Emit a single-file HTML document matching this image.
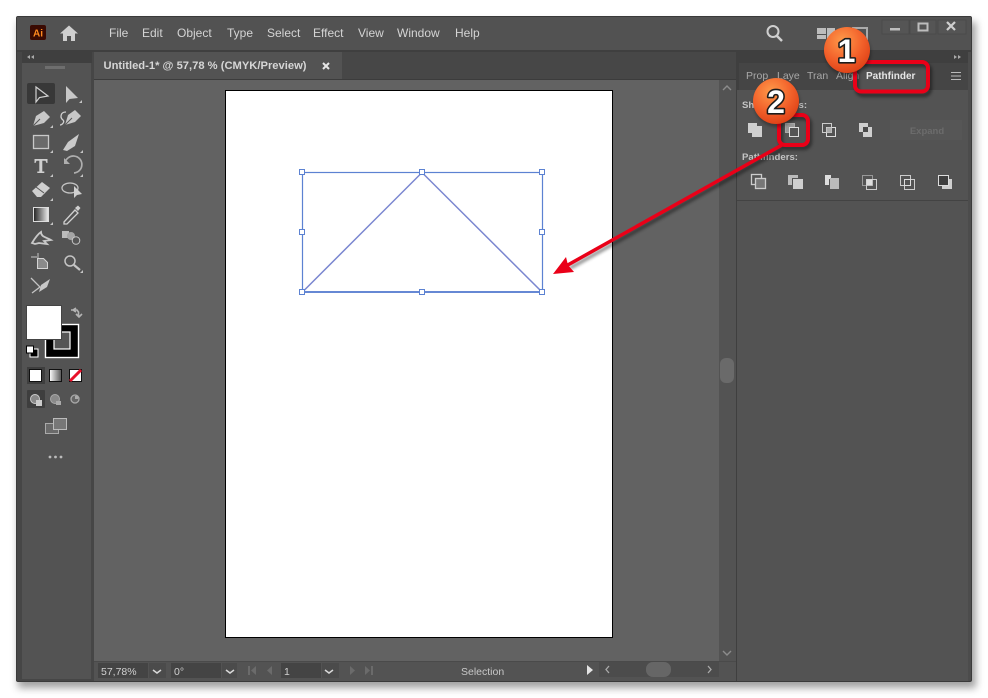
<!DOCTYPE html>
<html><head><meta charset="utf-8"><style>
html,body{margin:0;padding:0;background:#fff;width:988px;height:698px;overflow:hidden}
svg{display:block}
text{font-family:"Liberation Sans",sans-serif}
#all{filter:blur(.35px)}
.num{paint-order:stroke;stroke:#1c1c1c;stroke-width:3.2px;stroke-linejoin:round;fill:#fff;font-weight:bold;font-size:32px;text-anchor:middle}
</style></head><body>
<svg width="988" height="698" viewBox="0 0 988 698" xmlns="http://www.w3.org/2000/svg">
<defs>
<filter id="ws" x="-5%" y="-5%" width="110%" height="110%"><feGaussianBlur stdDeviation="4"/></filter>
<filter id="rs" x="-20%" y="-20%" width="140%" height="140%"><feGaussianBlur stdDeviation="1.5"/></filter>
<radialGradient id="ball" cx="0.4" cy="0.3" r="0.8"><stop offset="0" stop-color="#ff9a4a"/><stop offset="0.55" stop-color="#f2602a"/><stop offset="1" stop-color="#d93a12"/></radialGradient>
<linearGradient id="gr" x1="0" x2="1"><stop offset="0" stop-color="#222"/><stop offset="1" stop-color="#eee"/></linearGradient>
<linearGradient id="gr2" x1="0" x2="1"><stop offset="0" stop-color="#fff"/><stop offset="1" stop-color="#555"/></linearGradient>
</defs>
<g id="all">
<rect x="18" y="22" width="958" height="666" fill="#555" opacity=".55" filter="url(#ws)"/>
<rect x="16" y="16" width="956" height="666" rx="2" fill="#4c4c4c"/>
<rect x="16.500" y="16.500" width="955" height="665" rx="2" fill="none" stroke="#3a3a3a"/>
<!-- title bar -->
<rect x="17" y="17" width="954" height="33" fill="#525252"/>
<rect x="17" y="50" width="954" height="2" fill="#3f3f3f"/>
<rect x="30" y="25" width="16" height="15" rx="2" fill="#3a0a02"/>
<text x="38" y="36.500" font-size="10" font-weight="bold" fill="#ff8a1e" text-anchor="middle">Ai</text>
<path d="M60 33.500 L69 25.500 L78 33.500 L75 33.500 V41 H71 V36 H67 V41 H63 V33.500Z" fill="#cfcfcf"/>
<g font-size="12" fill="#d4d4d4">
<text x="109" y="37">File</text><text x="142" y="37">Edit</text><text x="177" y="37">Object</text><text x="227" y="37">Type</text><text x="267" y="37">Select</text><text x="313" y="37">Effect</text><text x="358" y="37">View</text><text x="397" y="37">Window</text><text x="455" y="37">Help</text>
</g>
<circle cx="773" cy="31.500" r="5.500" fill="none" stroke="#cfcfcf" stroke-width="2"/><path d="M777 36 L782 41" stroke="#cfcfcf" stroke-width="2.500"/>
<path d="M817 28h9v6h-9zM817 35h9v4h-9zM827 28h8v11h-8z" fill="#bdbdbd"/>
<rect x="853" y="28" width="14" height="11" fill="none" stroke="#aaa" stroke-width="2"/>
<rect x="882" y="20" width="27" height="14" fill="#555" stroke="#4a4a4a"/><rect x="910" y="20" width="26" height="14" fill="#555" stroke="#4a4a4a"/><rect x="938" y="20" width="28" height="14" fill="#555" stroke="#4a4a4a"/>
<rect x="890" y="28" width="10" height="2.500" fill="#bdbdbd"/>
<rect x="918.500" y="23.500" width="9" height="7" fill="none" stroke="#bdbdbd" stroke-width="2"/>
<path d="M947 22 L955 30 M955 22 L947 30" stroke="#cfcfcf" stroke-width="2.200"/>
<!-- left panel -->
<rect x="17" y="52" width="77" height="629" fill="#464646"/>
<rect x="22" y="52" width="70" height="11" fill="#3f3f3f"/>
<rect x="22" y="63" width="69" height="616" fill="#535353"/>
<path d="M30 55v4l-3-2zM34 55v4l-3-2z" fill="#aaa"/>
<rect x="45" y="66" width="20" height="3" fill="#6e6e6e"/>
<rect x="27" y="83" width="28" height="21" rx="2" fill="#383838"/>
<!-- tools -->
<path d="M36 87 L36 102 L39.500 97.500 L48 96Z" fill="none" stroke="#d0d0d0" stroke-width="1.200"/>
<path d="M66 86 L66 103 L69.500 99 L78 98Z" fill="#c8c8c8"/>
<!-- pen -->
<path d="M33 126 L36 116 L44 111 L50 117 L44 123Z" fill="#c8c8c8"/><path d="M33 126 L40 119" stroke="#555"/>
<!-- curvature -->
<path d="M65 125 L68 115 L75 110 L81 116 L75 122Z" fill="#c8c8c8"/><path d="M65 125 L72 118" stroke="#555"/>
<path d="M66 112 C60 112 60 118 63 120 C65 122 62 125 60 125" fill="none" stroke="#d0d0d0" stroke-width="1.300"/>
<rect x="33.500" y="135.500" width="15" height="13" fill="#6a6a6a" stroke="#c8c8c8" stroke-width="1.300"/>
<path d="M63 150 L68 142 L79 134 L75 146 L67 151Z" fill="#cacaca"/>
<!-- T -->
<path d="M34.500 159h13v4h-1l-1-2.300h-3.200v10.800h2v1.500h-7v-1.500h2V160.700H36.500l-1 2.300h-1z" fill="#cfcfcf"/>
<!-- rotate -->
<path d="M65 163 A8.500 8.500 0 1 1 74 173" fill="none" stroke="#aeaeae" stroke-width="1.700"/><path d="M64 158v6h6z" fill="#aeaeae"/>
<!-- eraser -->
<path d="M32 191 L42 182 L50 188 L41 197 H37Z" fill="#cfcfcf"/><path d="M36 187 L44 193" stroke="#555"/>
<!-- lasso/perspective -->
<ellipse cx="70" cy="188" rx="8" ry="5" fill="none" stroke="#c4c4c4" stroke-width="1.300"/><path d="M74 186 L74 198 L77 195 L82 194Z" fill="#d0d0d0"/>
<rect x="33.500" y="207.500" width="15" height="14" fill="url(#gr)" stroke="#ddd"/>
<path d="M64 222 L75 210 L78 213 L67 224 L64 224Z" fill="none" stroke="#d0d0d0" stroke-width="1.300"/><path d="M75 208 L78 205.500 L80.500 208 L78 211Z" fill="#d0d0d0"/>
<!-- puppet -->
<path d="M32 243 C35 238 38 234 41 232 C41 237 46 237 51 240 L44 241 L47 244 L39 243 L35 244Z" fill="none" stroke="#c8c8c8" stroke-width="1.800"/>
<rect x="62" y="231" width="7" height="7" fill="#bbb"/><circle cx="71" cy="236" r="4" fill="#a5a5a5"/><circle cx="76" cy="240.500" r="3.800" fill="#555" stroke="#c8c8c8"/>
<path d="M38 253v7M31 257h6" stroke="#c4c4c4"/><path d="M37.500 258.500h6l4 4v6h-10z" fill="#8a8a8a" stroke="#d4d4d4"/>
<circle cx="70" cy="261" r="5" fill="none" stroke="#c4c4c4" stroke-width="1.500"/><path d="M74 265 L80 270" stroke="#c4c4c4" stroke-width="2.200"/>
<path d="M31 278 L40 287 L32 293" fill="none" stroke="#c4c4c4" stroke-width="1.300"/><path d="M41 285 L50 279 L47 287 L39 292Z" fill="#c8c8c8"/>
<!-- corner triangles -->
<g fill="#c4c4c4"><path d="M82 100v3h-3zM53 125v3h-3zM53 150v3h-3zM83 150v3h-3zM53 174v3h-3zM83 174v3h-3zM53 198v3h-3zM53 222v3h-3zM83 270v3h-3z"/></g>
<!-- fill stroke -->
<rect x="45.500" y="324.500" width="33" height="33" fill="#000" stroke="#fff" stroke-width="1.400"/>
<rect x="54" y="332" width="16" height="17" fill="#555" stroke="#fff" stroke-width="1.200"/>
<rect x="26.500" y="305.500" width="35" height="34" fill="#fff" stroke="#444"/>
<path d="M71 310h6l1.500 2v4M76 308l-3 2 3 2M76 314l3 3 3-3" fill="none" stroke="#b4b4b4" stroke-width="1.600"/>
<rect x="30" y="349" width="8" height="8" fill="#000" stroke="#fff"/><rect x="26.500" y="346" width="7" height="7" fill="#fff" stroke="#000"/>
<rect x="27" y="367" width="18" height="17" fill="#3e3e3e"/>
<rect x="29.500" y="369.500" width="12" height="12" fill="#fff" stroke="#111"/>
<rect x="49.500" y="369.500" width="12" height="12" fill="url(#gr2)" stroke="#111"/>
<rect x="69.500" y="369.500" width="12" height="12" fill="#fff" stroke="#111"/><path d="M70 381 L81 370" stroke="#e8112a" stroke-width="3"/>
<rect x="27" y="390" width="18" height="18" rx="1" fill="#3e3e3e"/>
<circle cx="35" cy="399" r="4.500" fill="#888" stroke="#ccc"/><rect x="36" y="400" width="6" height="6" fill="#ccc"/>
<circle cx="55" cy="399" r="4.500" fill="#8a8a8a" stroke="#aaa"/><rect x="56" y="401" width="5" height="4" fill="#aaa"/>
<circle cx="75" cy="399" r="4" fill="#666" stroke="#aaa" stroke-width="1.300"/><rect x="75" y="396" width="3" height="3" fill="#aaa"/>
<rect x="45.500" y="423.500" width="13" height="10" fill="#6a6a6a" stroke="#aaa"/><rect x="53.500" y="418.500" width="13" height="11" fill="#777" stroke="#bbb"/>
<circle cx="50" cy="457" r="1.400" fill="#bbb"/><circle cx="55.500" cy="457" r="1.400" fill="#bbb"/><circle cx="61" cy="457" r="1.400" fill="#bbb"/>
<!-- tab bar -->
<rect x="94" y="52" width="642" height="28" fill="#474747"/>
<rect x="94" y="52" width="248" height="27" fill="#535353"/>
<rect x="94" y="79" width="642" height="1" fill="#3c3c3c"/>
<text x="103.500" y="69" font-size="11.200" font-weight="bold" fill="#d6d6d6">Untitled-1* @ 57,78 % (CMYK/Preview)</text>
<path d="M323 63 L329 69 M329 63 L323 69" stroke="#e6e6e6" stroke-width="2"/>
<!-- canvas -->
<rect x="94" y="80" width="625" height="581" fill="#626262"/>
<rect x="719" y="80" width="17" height="581" fill="#535353"/>
<rect x="736" y="52" width="3" height="629" fill="#3f3f3f"/>
<path d="M723 90 L727 86 L731 90" fill="none" stroke="#8c8c8c" stroke-width="1.400"/>
<path d="M723 651 L727 655 L731 651" fill="none" stroke="#8c8c8c" stroke-width="1.400"/>
<rect x="720" y="358" width="14" height="25" rx="6" fill="#6a6a6a"/>
<!-- artboard -->
<rect x="225.500" y="90.500" width="387" height="547" fill="#fff" stroke="#000"/>
<!-- selection -->
<rect x="302.500" y="172.500" width="240" height="119.500" fill="none" stroke="#5c82d2" stroke-width="1.200"/>
<path d="M302.500 292 L422 172.500 L542 292Z" fill="none" stroke="#7a86d0" stroke-width="1.500"/>
<path d="M302 292 H542" stroke="#5c82d2" stroke-width="1.700"/>
<g fill="#fff" stroke="#5c82d2"><rect x="299.500" y="169.500" width="5" height="5"/><rect x="419.500" y="169.500" width="5" height="5"/><rect x="539.500" y="169.500" width="5" height="5"/><rect x="299.500" y="229.500" width="5" height="5"/><rect x="539.500" y="229.500" width="5" height="5"/><rect x="299.500" y="289.500" width="5" height="5"/><rect x="419.500" y="289.500" width="5" height="5"/><rect x="539.500" y="289.500" width="5" height="5"/></g>
<!-- status bar -->
<rect x="94" y="661" width="642" height="20" fill="#535353"/>
<rect x="94" y="661" width="642" height="1" fill="#4a4a4a"/>
<rect x="98" y="663" width="50" height="15" fill="#444"/><rect x="149" y="663" width="17" height="15" fill="#4b4b4b"/>
<rect x="171" y="663" width="50" height="15" fill="#444"/><rect x="222" y="663" width="15" height="15" fill="#4b4b4b"/>
<rect x="281" y="663" width="40" height="15" fill="#444"/><rect x="322" y="663" width="17" height="15" fill="#4b4b4b"/>
<g font-size="10.500" fill="#d0d0d0"><text x="101" y="675">57,78%</text><text x="174" y="675">0°</text><text x="284" y="675">1</text><text x="461" y="675" fill="#c8c8c8">Selection</text></g>
<g fill="none" stroke="#d8d8d8" stroke-width="1.500"><path d="M153 670l4 3 4-3M226 670l4 3 4-3M325 670l4 3 4-3"/></g>
<g fill="#6b6b6b"><path d="M248 666h2v9h-2zM256 666v9l-5-4.500zM272 666v9l-5-4.500zM350 666v9l5-4.500zM365 666v9l5-4.500zM371 666h2v9h-2z"/></g>
<path d="M587 665 v10 l6-5z" fill="#e4e4e4"/>
<rect x="599" y="662" width="120" height="15" fill="#4c4c4c"/>
<rect x="646" y="662" width="25" height="15" rx="7" fill="#666"/>
<path d="M609 666l-3 3.500 3 3.500M708 666l3 3.500-3 3.500" fill="none" stroke="#aaa" stroke-width="1.300"/>
<!-- right panel -->
<rect x="739" y="52" width="229" height="11" fill="#3f3f3f"/>
<path d="M954 55v4l3-2zM958 55v4l3-2z" fill="#aaa"/>
<rect x="739" y="63" width="229" height="27" fill="#454545"/>
<rect x="856" y="63" width="70" height="27" fill="#535353"/>
<rect x="737" y="90" width="231" height="591" fill="#535353"/>
<rect x="737" y="200" width="231" height="1" fill="#434343"/>
<g font-size="10.500" fill="#a8a8a8"><text x="746" y="79">Prop</text><text x="777" y="79">Laye</text><text x="807" y="79">Tran</text><text x="836" y="79">Align</text></g>
<text x="866" y="79" font-size="10" font-weight="bold" fill="#e6e6e6">Pathfinder</text>
<path d="M951 72.500h10M951 76h10M951 79.500h10" stroke="#bbb" stroke-width="1.100"/>
<g font-size="9.600" font-weight="bold" fill="#c4c4c4"><text x="742" y="108">Shape Modes:</text><text x="742" y="160">Pathfinders:</text></g>
<!-- shape modes -->
<path d="M748 123h9v3h5v11h-10v-4h-4z" fill="#cfcfcf"/>
<rect x="785.500" y="123.500" width="9" height="9" fill="#999" stroke="#aaa"/><rect x="789.500" y="127.500" width="9" height="9" fill="#555" stroke="#ddd"/>
<rect x="822.500" y="123.500" width="9" height="9" fill="none" stroke="#ccc"/><rect x="826.500" y="127.500" width="9" height="9" fill="none" stroke="#ddd"/><rect x="826.500" y="127.500" width="5" height="5" fill="#aaa"/>
<path d="M859 123h9v4h-5v5h-4zM868 127h4v10h-9v-5h5z" fill="#cfcfcf"/><rect x="863" y="127" width="5" height="5" fill="#4a4a4a"/>
<rect x="890" y="120" width="72" height="20" fill="#565656"/>
<text x="927" y="134" font-size="9.500" fill="#6c6c6c" text-anchor="middle" font-weight="bold">Expand</text>
<!-- pathfinders -->
<rect x="751.500" y="174.500" width="10" height="10" fill="none" stroke="#ccc" stroke-width="1.300"/><rect x="755.500" y="178.500" width="10" height="10" fill="#777" stroke="#ccc" stroke-width="1.300"/>
<path d="M788 175h10v3h-6v7h-4z" fill="#bbb"/><rect x="793" y="179" width="10" height="10" fill="#cfcfcf"/>
<path d="M825 175h6v4h-2v6h-4z" fill="#ddd"/><path d="M830 178h9v11h-9z" fill="#bbb"/>
<rect x="862.500" y="175.500" width="10" height="10" fill="none" stroke="#999"/><rect x="866.500" y="179.500" width="10" height="10" fill="none" stroke="#ccc"/><rect x="866.500" y="179.500" width="6" height="6" fill="#ddd"/>
<rect x="900.500" y="175.500" width="10" height="10" fill="none" stroke="#ccc"/><rect x="904.500" y="179.500" width="10" height="10" fill="none" stroke="#ccc"/><rect x="904.500" y="179.500" width="6" height="6" fill="none" stroke="#ddd"/>
<rect x="942" y="179" width="10" height="10" fill="#cfcfcf"/><rect x="938.500" y="175.500" width="10" height="10" fill="#3f3f3f" stroke="#ddd"/>
<!-- annotations shadow -->
<g filter="url(#rs)" opacity=".45" transform="translate(2,3)" fill="none" stroke="#000">
<rect x="855" y="62" width="73" height="30" rx="6" stroke-width="4"/>
<rect x="779" y="115" width="29" height="30" rx="6" stroke-width="4"/>
<path d="M780 146 L568 265" stroke-width="3.500"/>
</g>
<!-- annotations -->
<g fill="none" stroke="#ea0018">
<rect x="855" y="62" width="73" height="29.500" rx="6" stroke-width="4"/>
<rect x="779" y="115" width="29" height="30" rx="6" stroke-width="4"/>
<path d="M782 145 L566 266" stroke-width="3.500"/>
</g>
<path d="M553 274 L566 257 L568 265 L574 272Z" fill="#ea0018"/>
<!-- badges -->
<circle cx="848" cy="53" r="23" fill="#000" opacity=".3" filter="url(#rs)"/>
<circle cx="847" cy="50" r="23" fill="url(#ball)"/>
<text class="num" x="846.500" y="62">1</text>
<circle cx="777" cy="104" r="23" fill="#000" opacity=".3" filter="url(#rs)"/>
<circle cx="776" cy="101" r="23" fill="url(#ball)"/>
<text class="num" x="776" y="113">2</text>
</g>
</svg>
</body></html>
